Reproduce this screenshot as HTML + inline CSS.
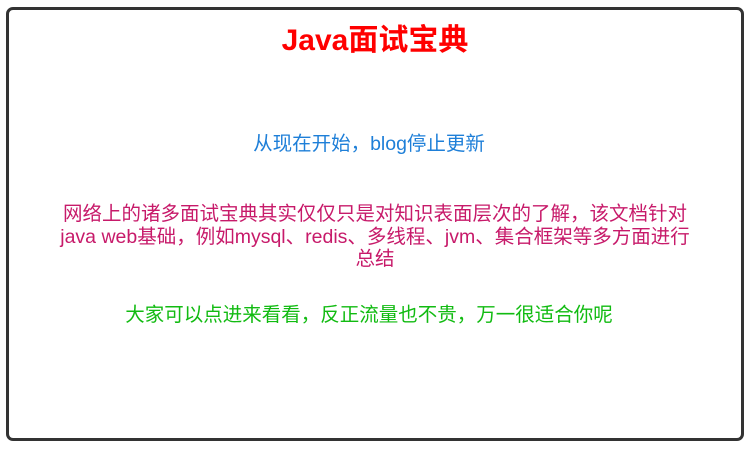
<!DOCTYPE html>
<html><head><meta charset="utf-8"><style>
body{margin:0;width:750px;height:449px;background:#fff;overflow:hidden;font-family:"Liberation Sans","Noto Sans CJK SC",sans-serif;position:relative}
.box{position:absolute;left:6px;top:7px;width:732px;height:428px;border:3px solid #333;border-radius:7px;background:#fff}
.t{position:absolute;left:-6px;width:750px;text-align:center;font-size:19.5px;line-height:22.5px;white-space:nowrap}
</style></head><body>
<div class="box"></div>
<div class="t" style="top:22px;left:0;font-size:30px;font-weight:bold;color:#ff0000;line-height:38px">Java面试宝典</div>
<div class="t" style="top:133px;color:#1e7fd8">从现在开始，blog停止更新</div>
<div class="t" style="top:203px;left:0;color:#c71a6a">网络上的诸多面试宝典其实仅仅只是对知识表面层次的了解，该文档针对<br>java web基础，例如mysql、redis、多线程、jvm、集合框架等多方面进行<br>总结</div>
<div class="t" style="top:304px;color:#11bb11">大家可以点进来看看，反正流量也不贵，万一很适合你呢</div>
</body></html>
